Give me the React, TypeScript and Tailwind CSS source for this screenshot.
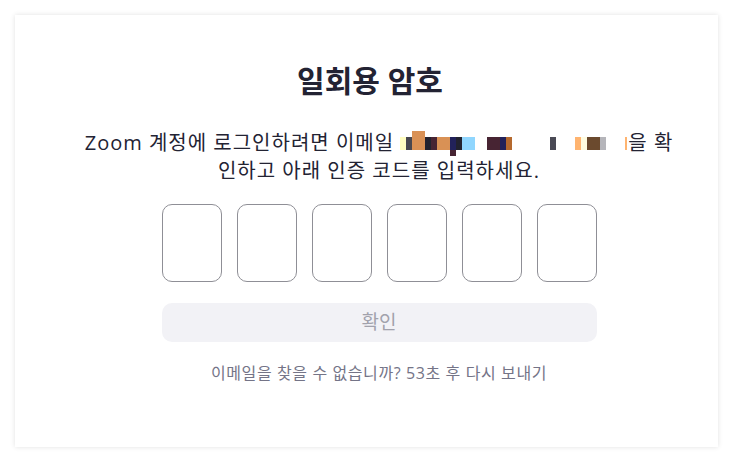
const blocks: { x: number; w: number; c: string; top?: number; h?: number }[] = [
  { x: 0, w: 6, c: "#fffdc0" },
  { x: 6, w: 6, c: "#48474f" },
  { x: 12, w: 13, c: "#d99155", top: 0, h: 19 },
  { x: 25, w: 6, c: "#22222f" },
  { x: 31, w: 6, c: "#472433" },
  { x: 37, w: 13, c: "#d99155" },
  { x: 50, w: 6, c: "#22225a" },
  { x: 50, w: 6, c: "#472433", top: 19, h: 6 },
  { x: 56, w: 6, c: "#22222f" },
  { x: 62, w: 13, c: "#90d6fe" },
  { x: 87, w: 13, c: "#472433" },
  { x: 100, w: 6, c: "#22225a" },
  { x: 106, w: 6, c: "#b5692e" },
  { x: 150, w: 6, c: "#4a4a55" },
  { x: 175, w: 6, c: "#ffb470" },
  { x: 181, w: 6, c: "#fffce0" },
  { x: 187, w: 13, c: "#6b4a2e" },
  { x: 200, w: 6, c: "#b5b5ba" },
  { x: 225, w: 2, c: "#ffb470" },
];

function Redacted() {
  return (
    <span className="relative inline-block h-[19px] w-[228px]">
      {blocks.map((b, i) => (
        <span
          key={i}
          className="absolute"
          style={{ left: b.x, width: b.w, top: b.top ?? 6, height: b.h ?? 13, background: b.c }}
        />
      ))}
    </span>
  );
}

export default function App() {
  return (
    <div
      className="h-[462px] w-[733px] bg-white p-[15px]"
      style={{ fontFamily: '"Open Sans", "Noto Sans CJK KR", sans-serif' }}
    >
      <div className="flex h-full w-full flex-col items-center bg-white pl-[25px] pt-[45px] shadow-[0_0_5px_rgba(0,0,0,0.12)]">
        <h1 className="mr-[18px] text-[30px] font-bold leading-[42px] text-[#232333]">일회용 암호</h1>
        <p className="mt-[27px] whitespace-nowrap text-center text-[20px] leading-[28px] tracking-[1px] text-[#232333]">
          Zoom 계정에 로그인하려면 이메일 <Redacted />을 확<br />
          인하고 아래 인증 코드를 입력하세요.
        </p>
        <div className="mt-[19px] flex gap-[15px]">
          {[0, 1, 2, 3, 4, 5].map((i) => (
            <input
              key={i}
              className="h-[78px] w-[60px] rounded-[10px] border border-[#8f8f96] bg-white text-center text-[28px] outline-none"
            />
          ))}
        </div>
        <button className="mt-[21px] h-[39px] w-[435px] rounded-[10px] bg-[#f2f2f6] text-[19px] text-[#a2a2ac]">
          확인
        </button>
        <p className="mt-[20px] text-[16px] leading-[22px] tracking-[0.6px] text-[#747487]">
          이메일을 찾을 수 없습니까? 53초 후 다시 보내기
        </p>
      </div>
    </div>
  );
}
